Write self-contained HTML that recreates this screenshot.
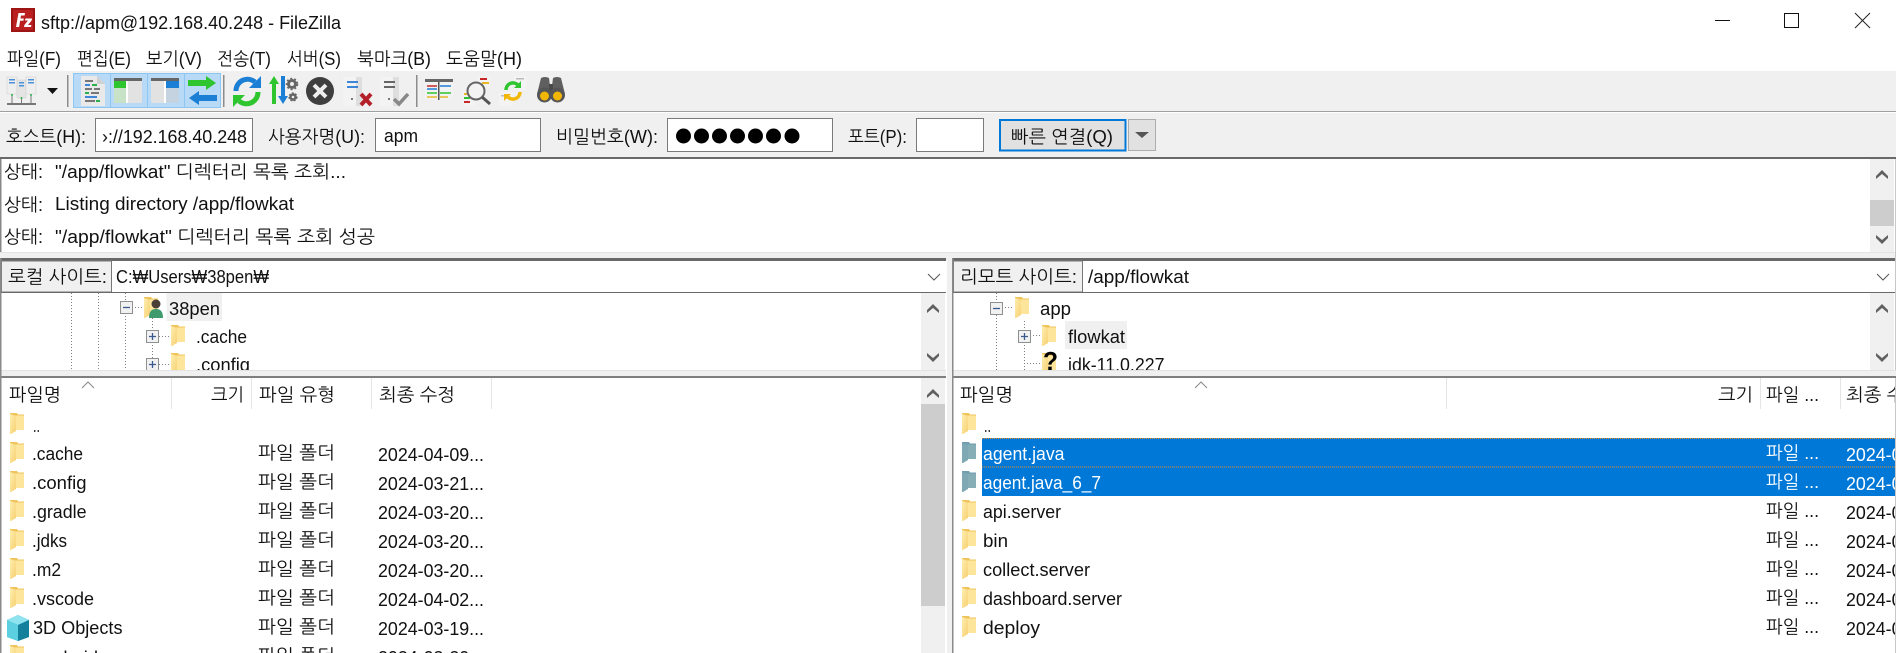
<!DOCTYPE html>
<html lang="ko"><head><meta charset="utf-8"><title>FileZilla</title>
<style>
html,body{margin:0;padding:0;background:#fff;overflow:hidden;width:1896px;height:653px}
svg{display:block}
text{font-family:"Liberation Sans","NanumGothic","Noto Sans CJK KR",sans-serif;font-size:18px;fill:#111}
.w{fill:#fff}
</style></head><body>
<svg xmlns="http://www.w3.org/2000/svg" width="1896" height="653" viewBox="0 0 1896 653">
<defs>
<linearGradient id="fg" x1="0" y1="0" x2="1" y2="1"><stop offset="0" stop-color="#fdeeb0"/><stop offset="1" stop-color="#f8d071"/></linearGradient>
<g id="f"><path d="M0 0H7L8 1.500H14V17H0Z" fill="#f0c45c"/><path d="M5 2.500H14V17H5Z" fill="#fde69c"/><path d="M0 1L6 3V18L1 21H0Z" fill="url(#fg)"/></g>
<g id="fs"><path d="M0 0H7L8 1.500H14V17H0Z" fill="#6f9fb0"/><path d="M5 2.500H14V17H5Z" fill="#86aeb6"/><path d="M0 1L6 3V18L1 21H0Z" fill="#7ea8b4"/></g>
<path id="up" d="M0 6L6 0L12 6L12 9L6 4L0 9Z" fill="#606060"/>
<path id="dn" d="M0 0L6 5L12 0L12 3L6 9L0 3Z" fill="#606060"/>
<g id="plus"><rect x=".5" y=".5" width="12" height="12" fill="#f1f1f1" stroke="#8e8f8f"/><path d="M3 6.5H10M6.5 3V10" stroke="#3b5a90" stroke-width="1.3"/></g>
<g id="minus"><rect x=".5" y=".5" width="12" height="12" fill="#f1f1f1" stroke="#8e8f8f"/><path d="M3 6.5H10" stroke="#3b5a90" stroke-width="1.3"/></g>
</defs>

<!-- base -->
<rect width="1896" height="653" fill="#fff"/>

<!-- title bar -->
<rect x="11" y="8" width="24" height="24" fill="#9d1414"/>
<rect x="13" y="10" width="20" height="20" fill="#bb2020"/>
<path d="M16 27L18.500 13H25L24.600 15.500H21L20.500 18.500H23.800L23.400 20.800H20.100L19.100 27ZM24 27L24.400 25L28 20.500H25L25.400 18.500H32L31.600 20.500L28 25H31.400L31 27Z" fill="#fff"/>
<text x="41" y="29" textLength="300" lengthAdjust="spacingAndGlyphs">sftp://apm@192.168.40.248 - FileZilla</text>
<rect x="1715" y="20" width="15" height="1" fill="#111"/>
<rect x="1784.500" y="13.500" width="14" height="14" fill="none" stroke="#111"/>
<path d="M1855 13L1870 28M1870 13L1855 28" stroke="#222" stroke-width="1"/>

<!-- menu -->
<text x="7" y="65" textLength="54" lengthAdjust="spacingAndGlyphs">파일(F)</text>
<text x="77" y="65" textLength="54" lengthAdjust="spacingAndGlyphs">편집(E)</text>
<text x="146" y="65" textLength="56" lengthAdjust="spacingAndGlyphs">보기(V)</text>
<text x="217" y="65" textLength="54" lengthAdjust="spacingAndGlyphs">전송(T)</text>
<text x="287" y="65" textLength="54" lengthAdjust="spacingAndGlyphs">서버(S)</text>
<text x="357" y="65" textLength="74" lengthAdjust="spacingAndGlyphs">북마크(B)</text>
<text x="446" y="65" textLength="76" lengthAdjust="spacingAndGlyphs">도움말(H)</text>

<!-- toolbar -->
<rect y="71" width="1896" height="40" fill="#f0f0f0"/>
<rect y="111" width="1896" height="1" fill="#a0a0a0"/>
<rect y="112" width="1896" height="1" fill="#fff"/>
<!-- site manager -->
<g>
<rect x="7" y="77" width="10" height="17" fill="#eee" stroke="#ccc" stroke-width=".5"/><rect x="9" y="79" width="6" height="1.500" fill="#4a90d9"/><rect x="9" y="82" width="6" height="1.500" fill="#4a90d9"/>
<rect x="17" y="80" width="9" height="18" fill="#e4e4e4" stroke="#ccc" stroke-width=".5"/><rect x="19" y="82" width="5" height="1.500" fill="#4a90d9"/><rect x="19" y="85" width="5" height="1.500" fill="#4a90d9"/>
<rect x="26" y="77" width="10" height="17" fill="#eee" stroke="#ccc" stroke-width=".5"/><rect x="28" y="79" width="6" height="1.500" fill="#4a90d9"/><rect x="28" y="82" width="6" height="1.500" fill="#4a90d9"/>
<path d="M12 94V103M21.500 98V103M31 94V103" stroke="#777" stroke-width="1"/><rect x="7" y="103" width="29" height="2" fill="#777"/>
<circle cx="12" cy="95" r="1" fill="#2bb24c"/><circle cx="21.500" cy="98" r="1" fill="#2bb24c"/><circle cx="31" cy="95" r="1" fill="#2bb24c"/>
</g>
<path d="M47 88H58L52.500 94Z" fill="#111"/>
<rect x="67" y="75" width="1.500" height="32" fill="#8c8c8c"/>
<rect x="73.500" y="73.500" width="147" height="34" fill="#b8daf6" stroke="#8cc6f3"/>
<path d="M110.500 74V107M147.500 74V107M184.500 74V107" stroke="#8cc6f3"/>
<!-- message log -->
<path d="M81 76H97L105 84V106H81Z" fill="#e9e9e9"/><path d="M97 76L105 84H97Z" fill="#d0d0d0"/>
<g stroke-width="2"><path d="M85 81H93" stroke="#777"/><path d="M85 85H90" stroke="#3f86d8"/><path d="M92 85H97" stroke="#2bb24c"/><path d="M85 89H92" stroke="#777"/><path d="M94 89H100" stroke="#777"/><path d="M85 93H89" stroke="#2bb24c"/><path d="M91 93H99" stroke="#777"/><path d="M85 97H97" stroke="#3f86d8"/><path d="M85 101H95" stroke="#777"/><path d="M96 101H100" stroke="#2bb24c"/></g>
<!-- local tree -->
<rect x="114" y="78" width="28" height="25" rx="1" fill="#e2e2e2"/><rect x="114" y="78" width="28" height="3" fill="#666"/><rect x="114" y="81" width="12" height="7" fill="#2ec52e"/><rect x="114" y="88" width="12" height="15" fill="#c8e2c8"/><rect x="126" y="81" width="2" height="22" fill="#fff"/>
<!-- remote tree -->
<rect x="151" y="78" width="28" height="25" rx="1" fill="#e2e2e2"/><rect x="151" y="78" width="28" height="3" fill="#666"/><rect x="166" y="81" width="13" height="7" fill="#1c7fd6"/><rect x="166" y="88" width="13" height="15" fill="#c5d2df"/><rect x="164" y="81" width="2" height="22" fill="#fff"/>
<!-- queue arrows -->
<path d="M188 80H206V76L216 83L206 90V86H188Z" fill="#2ec52e"/><path d="M217 95H199V91L189 98L199 105V101H217Z" fill="#1c7fd6"/>
<rect x="223" y="75" width="1.500" height="32" fill="#8c8c8c"/>
<!-- refresh -->
<path d="M236 91A11.500 11.500 0 0 1 255 82" fill="none" stroke="#1c7fd6" stroke-width="5"/><path d="M249 88H261V76Z" fill="#1c7fd6"/>
<path d="M258 92A11.500 11.500 0 0 1 239 101" fill="none" stroke="#2ec52e" stroke-width="5"/><path d="M245 95H233V107Z" fill="#2ec52e"/>
<!-- process queue -->
<path d="M274 76L279 84H276V104H272V84H269Z" fill="#2ec52e"/><path d="M281 76H285V96H288L283 104L278 96H281Z" fill="#1c7fd6"/>
<circle cx="292" cy="84" r="3.500" fill="none" stroke="#666" stroke-width="3"/><circle cx="292" cy="84" r="5.500" fill="none" stroke="#666" stroke-width="1.500" stroke-dasharray="2 2"/>
<circle cx="293" cy="97" r="2.500" fill="none" stroke="#666" stroke-width="2.500"/><circle cx="293" cy="97" r="4" fill="none" stroke="#666" stroke-width="1.200" stroke-dasharray="2 1.500"/>
<!-- cancel -->
<circle cx="320" cy="91" r="14" fill="#3f3f3f"/><path d="M314 85L326 97M326 85L314 97" stroke="#eee" stroke-width="4"/>
<!-- disconnect -->
<path d="M343 77H362V106H343Z" fill="#f3f3f3"/><path d="M356 77H362V106H356Z" fill="#dedede"/><rect x="347" y="81" width="11" height="2" fill="#3f86d8"/><rect x="347" y="86" width="11" height="2" fill="#3f86d8"/><circle cx="352" cy="99" r="1" fill="#555"/>
<path d="M361 94L371 105M371 94L361 105" stroke="#b3202a" stroke-width="4"/>
<!-- reconnect -->
<path d="M380 77H399V106H380Z" fill="#f3f3f3"/><path d="M393 77H399V106H393Z" fill="#dedede"/><rect x="384" y="81" width="11" height="2" fill="#666"/><rect x="384" y="86" width="11" height="2" fill="#666"/><circle cx="389" cy="99" r="1" fill="#555"/>
<path d="M394 99L399 104L408 94" fill="none" stroke="#888" stroke-width="3.500"/>
<rect x="416" y="75" width="1.500" height="32" fill="#8c8c8c"/>
<!-- filter -->
<rect x="425" y="79" width="28" height="21" fill="#f2f2f2"/><rect x="425" y="79" width="28" height="3" fill="#666"/><rect x="438" y="82" width="1.500" height="18" fill="#555"/>
<path d="M427 86H437" stroke="#c62828" stroke-width="1.500"/><path d="M427 89H437" stroke="#1c7fd6" stroke-width="1.500"/><path d="M427 93H437" stroke="#2ec52e" stroke-width="1.500"/><path d="M427 97H437" stroke="#e8b82a" stroke-width="1.500"/><path d="M440 86H451" stroke="#1c7fd6" stroke-width="1.500"/><path d="M440 93H451" stroke="#2ec52e" stroke-width="1.500"/><path d="M440 97H448" stroke="#e8b82a" stroke-width="1.500"/>
<!-- search -->
<rect x="478" y="77" width="12" height="12" fill="#f3f3f3"/><rect x="480" y="78" width="7" height="2" fill="#c62828"/><rect x="482" y="82" width="7" height="2" fill="#e8b82a"/>
<rect x="463" y="91" width="12" height="15" fill="#f3f3f3"/><rect x="464" y="93" width="6" height="2" fill="#e8b82a"/><rect x="464" y="97" width="6" height="2" fill="#2ec52e"/><rect x="464" y="101" width="6" height="2" fill="#c62828"/>
<circle cx="476" cy="91" r="8.500" fill="#f4f4f4" fill-opacity=".8" stroke="#666" stroke-width="2"/><path d="M482 97L490 104" stroke="#555" stroke-width="3"/>
<!-- sync -->
<rect x="514" y="76" width="13" height="14" fill="#f3f3f3"/><rect x="516" y="78" width="8" height="1.500" fill="#bbb"/><rect x="499" y="92" width="14" height="14" fill="#f3f3f3"/><rect x="501" y="95" width="8" height="1.500" fill="#bbb"/>
<path d="M506 90A7 7 0 0 1 518 85" fill="none" stroke="#2ec52e" stroke-width="3.500"/><path d="M514 88H521V81Z" fill="#2ec52e"/><path d="M520 92A7 7 0 0 1 508 97" fill="none" stroke="#f2b705" stroke-width="3.500"/><path d="M511 94H504V101Z" fill="#f2b705"/>
<!-- binoculars -->
<path d="M541 78Q545 76 549 78L550 86H552L553 78Q557 76 561 78L565 94H537Z" fill="#5f5f5f"/><rect x="549" y="84" width="4" height="8" fill="#4a4a4a"/><circle cx="544.500" cy="95" r="7.500" fill="#555"/><circle cx="557.500" cy="95" r="7.500" fill="#555"/><circle cx="544.500" cy="96" r="4.500" fill="#f2b705"/><circle cx="557.500" cy="96" r="4.500" fill="#f2b705"/>

<!-- quickconnect -->
<rect y="113" width="1896" height="44" fill="#f0f0f0"/>
<rect y="157" width="1896" height="2" fill="#696969"/>
<text x="6" y="143" textLength="80" lengthAdjust="spacingAndGlyphs">호스트(H):</text>
<rect x="95.500" y="118.500" width="157" height="33" fill="#fff" stroke="#7a7a7a"/>
<text x="102" y="143" textLength="145" lengthAdjust="spacingAndGlyphs">›://192.168.40.248</text>
<text x="268" y="143" textLength="97" lengthAdjust="spacingAndGlyphs">사용자명(U):</text>
<rect x="375.500" y="118.500" width="165" height="33" fill="#fff" stroke="#7a7a7a"/>
<text x="384" y="142" textLength="34" lengthAdjust="spacingAndGlyphs">apm</text>
<text x="556" y="143" textLength="102" lengthAdjust="spacingAndGlyphs">비밀번호(W):</text>
<rect x="667.500" y="118.500" width="165" height="33" fill="#fff" stroke="#7a7a7a"/>
<g fill="#000"><circle cx="683.500" cy="136" r="7.500"/><circle cx="701.500" cy="136" r="7.500"/><circle cx="719.500" cy="136" r="7.500"/><circle cx="737.500" cy="136" r="7.500"/><circle cx="755.500" cy="136" r="7.500"/><circle cx="773.500" cy="136" r="7.500"/><circle cx="792" cy="136" r="7.500"/></g>
<text x="848" y="143" textLength="59" lengthAdjust="spacingAndGlyphs">포트(P):</text>
<rect x="916.500" y="118.500" width="67" height="33" fill="#fff" stroke="#7a7a7a"/>
<rect x="1000" y="120" width="125.500" height="30.500" fill="#e1e1e1" stroke="#0078d7" stroke-width="2"/>
<text x="1011" y="143" textLength="102" lengthAdjust="spacingAndGlyphs">빠른 연결(Q)</text>
<rect x="1128.500" y="119.500" width="27" height="31" fill="#e1e1e1" stroke="#adadad"/>
<path d="M1135 132H1149L1142 138Z" fill="#555"/>

<!-- log -->
<rect y="159" width="1896" height="93" fill="#fff"/>
<rect x="0" y="159" width="1.500" height="93" fill="#888"/>
<text x="4" y="178" textLength="39" lengthAdjust="spacingAndGlyphs">상태:</text>
<text x="55" y="178" textLength="291" lengthAdjust="spacingAndGlyphs">"/app/flowkat" 디렉터리 목록 조회...</text>
<text x="4" y="211" textLength="39" lengthAdjust="spacingAndGlyphs">상태:</text>
<text x="55" y="210" textLength="239" lengthAdjust="spacingAndGlyphs">Listing directory /app/flowkat</text>
<text x="4" y="243" textLength="39" lengthAdjust="spacingAndGlyphs">상태:</text>
<text x="55" y="243" textLength="320" lengthAdjust="spacingAndGlyphs">"/app/flowkat" 디렉터리 목록 조회 성공</text>
<rect x="1870" y="159" width="24" height="93" fill="#f0f0f0"/>
<rect x="1870" y="200" width="24" height="26" fill="#cdcdcd"/>
<use href="#up" x="1876" y="170"/><use href="#dn" x="1876" y="235"/>
<rect y="252" width="1896" height="9" fill="#f0f0f0"/>
<rect y="252" width="1896" height="1" fill="#e3e3e3"/>
<rect x="0" y="258" width="946" height="3" fill="#696969"/>
<rect x="952" y="258" width="944" height="3" fill="#696969"/>

<!-- panels white -->
<rect x="1" y="261" width="945" height="109" fill="#fff"/>
<rect x="953" y="261" width="942" height="109" fill="#fff"/>

<!-- local path -->
<rect x="1.500" y="261" width="110" height="31" fill="#f0f0f0" stroke="#777"/>
<text x="8" y="283" textLength="99" lengthAdjust="spacingAndGlyphs">로컬 사이트:</text>
<text x="116" y="283" textLength="153" lengthAdjust="spacingAndGlyphs">C:₩Users₩38pen₩</text>
<path d="M928 274L934 280L940 274" fill="none" stroke="#555"/>
<rect x="0" y="292" width="946" height="1" fill="#696969"/>

<!-- remote path -->
<rect x="953.500" y="261" width="129" height="31" fill="#f0f0f0" stroke="#777"/>
<text x="960" y="283" textLength="117" lengthAdjust="spacingAndGlyphs">리모트 사이트:</text>
<text x="1088" y="283" textLength="101" lengthAdjust="spacingAndGlyphs">/app/flowkat</text>
<path d="M1877 274L1883 280L1889 274" fill="none" stroke="#555"/>
<rect x="952" y="292" width="944" height="1" fill="#696969"/>

<!-- right edge -->
<rect x="1895" y="159" width="1" height="494" fill="#c8c8c8"/>

<!-- local tree -->
<g stroke="#808080" stroke-dasharray="1 2" fill="none">
<path d="M71.500 293V370M98.500 293V370M125.500 293V302M152.500 318V370M132 307.500H143M159 336.500H169M159 364.500H169"/>
<path d="M125.500 313V370"/>
</g>
<use href="#minus" x="120" y="301"/>
<use href="#f" x="144" y="297"/>
<circle cx="156" cy="304" r="4.500" fill="#4a4038"/>
<path d="M149 318C149 311 152 309 156 309C160 309 163 311 163 318Z" fill="#3f9a6e"/>
<rect x="166.500" y="293" width="55.500" height="28" fill="#f0f0f0"/>
<text x="169" y="315" textLength="51" lengthAdjust="spacingAndGlyphs">38pen</text>
<use href="#plus" x="146" y="330"/>
<use href="#f" x="171" y="325"/>
<text x="196" y="343" textLength="51" lengthAdjust="spacingAndGlyphs">.cache</text>
<use href="#plus" x="146" y="358"/>
<use href="#f" x="171" y="353"/>
<text x="196" y="371" textLength="54" lengthAdjust="spacingAndGlyphs">.config</text>
<rect x="921" y="293" width="24" height="77" fill="#f0f0f0"/>
<use href="#up" x="927" y="304"/><use href="#dn" x="927" y="353"/>

<!-- right tree -->
<g stroke="#808080" stroke-dasharray="1 2" fill="none">
<path d="M996.500 293V303M996.500 315V370M1024.500 321V370M1002 307.500H1013M1030 335.500H1040M1024 363.500H1041"/>
</g>
<use href="#minus" x="990" y="302"/>
<use href="#f" x="1015" y="297"/>
<text x="1040" y="315" textLength="31" lengthAdjust="spacingAndGlyphs">app</text>
<use href="#plus" x="1018" y="330"/>
<use href="#f" x="1042" y="325"/>
<rect x="1065" y="321" width="62" height="28" fill="#f0f0f0"/>
<text x="1068" y="343" textLength="57" lengthAdjust="spacingAndGlyphs">flowkat</text>
<use href="#f" x="1042" y="353"/>
<text x="1043" y="370" style="font-size:26px;font-weight:bold;fill:#000" textLength="15" lengthAdjust="spacingAndGlyphs">?</text>
<text x="1068" y="371" textLength="96.500" lengthAdjust="spacingAndGlyphs">jdk-11.0.227</text>
<rect x="1870" y="293" width="24" height="77" fill="#f0f0f0"/>
<use href="#up" x="1876" y="304"/><use href="#dn" x="1876" y="353"/>

<!-- separator between tree and list -->
<rect x="0" y="370" width="946" height="8" fill="#f0f0f0"/>
<rect x="0" y="370" width="946" height="1" fill="#e3e3e3"/>
<rect x="0" y="376" width="946" height="2" fill="#7f7f7f"/>
<rect x="952" y="370" width="944" height="8" fill="#f0f0f0"/>
<rect x="952" y="370" width="944" height="1" fill="#e3e3e3"/>
<rect x="952" y="376" width="944" height="2" fill="#7f7f7f"/>
<rect x="947" y="258" width="5" height="395" fill="#f0f0f0"/>
<rect x="0" y="258" width="1.500" height="395" fill="#8a8a8a"/>
<rect x="952" y="258" width="1.500" height="395" fill="#8a8a8a"/>

<!-- left list -->
<g stroke="#e5e5e5"><path d="M171.500 378V409M251.500 378V409M371.500 378V409M491.500 378V409"/></g>
<path d="M82 388L88 382L94 388" fill="none" stroke="#888"/>
<text x="9" y="401" textLength="52" lengthAdjust="spacingAndGlyphs">파일명</text>
<text x="211" y="401" textLength="33" lengthAdjust="spacingAndGlyphs">크기</text>
<text x="259" y="401" textLength="76" lengthAdjust="spacingAndGlyphs">파일 유형</text>
<text x="379" y="401" textLength="76" lengthAdjust="spacingAndGlyphs">최종 수정</text>
<use href="#f" x="10" y="413"/><text x="33" y="432" textLength="7" lengthAdjust="spacingAndGlyphs">..</text>

<use href="#f" x="10" y="442"/><text x="32" y="460" textLength="51" lengthAdjust="spacingAndGlyphs">.cache</text><text x="258" y="459" textLength="77" lengthAdjust="spacingAndGlyphs">파일 폴더</text><text x="378" y="461" textLength="106" lengthAdjust="spacingAndGlyphs">2024-04-09...</text>
<use href="#f" x="10" y="471"/><text x="32" y="489" textLength="54.500" lengthAdjust="spacingAndGlyphs">.config</text><text x="258" y="488" textLength="77" lengthAdjust="spacingAndGlyphs">파일 폴더</text><text x="378" y="490" textLength="106" lengthAdjust="spacingAndGlyphs">2024-03-21...</text>
<use href="#f" x="10" y="500"/><text x="32" y="518" textLength="54.500" lengthAdjust="spacingAndGlyphs">.gradle</text><text x="258" y="517" textLength="77" lengthAdjust="spacingAndGlyphs">파일 폴더</text><text x="378" y="519" textLength="106" lengthAdjust="spacingAndGlyphs">2024-03-20...</text>
<use href="#f" x="10" y="529"/><text x="32" y="547" textLength="35" lengthAdjust="spacingAndGlyphs">.jdks</text><text x="258" y="546" textLength="77" lengthAdjust="spacingAndGlyphs">파일 폴더</text><text x="378" y="548" textLength="106" lengthAdjust="spacingAndGlyphs">2024-03-20...</text>
<use href="#f" x="10" y="558"/><text x="32" y="576" textLength="29" lengthAdjust="spacingAndGlyphs">.m2</text><text x="258" y="575" textLength="77" lengthAdjust="spacingAndGlyphs">파일 폴더</text><text x="378" y="577" textLength="106" lengthAdjust="spacingAndGlyphs">2024-03-20...</text>
<use href="#f" x="10" y="587"/><text x="32" y="605" textLength="62" lengthAdjust="spacingAndGlyphs">.vscode</text><text x="258" y="604" textLength="77" lengthAdjust="spacingAndGlyphs">파일 폴더</text><text x="378" y="606" textLength="106" lengthAdjust="spacingAndGlyphs">2024-04-02...</text>
<path d="M18 615L29 620V637L18 641L7 637V620Z" fill="#2aa7c9"/><path d="M7 620L18 615L29 620L18 625Z" fill="#8fe3ee"/><path d="M7 620L18 625V641L7 637Z" fill="#5ccfe0"/><path d="M18 625L29 620V637L18 641Z" fill="#14809c"/>
<text x="33" y="634" textLength="89.500" lengthAdjust="spacingAndGlyphs">3D Objects</text><text x="258" y="633" textLength="77" lengthAdjust="spacingAndGlyphs">파일 폴더</text><text x="378" y="635" textLength="106" lengthAdjust="spacingAndGlyphs">2024-03-19...</text>
<use href="#f" x="10" y="645"/><text x="32" y="664" textLength="66" lengthAdjust="spacingAndGlyphs">.android</text><text x="258" y="662" textLength="77" lengthAdjust="spacingAndGlyphs">파일 폴더</text><text x="378" y="664" textLength="106" lengthAdjust="spacingAndGlyphs">2024-03-20...</text>
<rect x="921" y="378" width="24" height="275" fill="#f0f0f0"/>
<rect x="921" y="404" width="24" height="202" fill="#cdcdcd"/>
<use href="#up" x="927" y="389"/>

<!-- right list -->
<g stroke="#e5e5e5"><path d="M1446.500 378V409M1760.500 378V409M1840.500 378V409"/></g>
<path d="M1195 388L1201 382L1207 388" fill="none" stroke="#888"/>
<text x="960" y="401" textLength="53" lengthAdjust="spacingAndGlyphs">파일명</text>
<text x="1718" y="401" textLength="35" lengthAdjust="spacingAndGlyphs">크기</text>
<text x="1766" y="401" textLength="53" lengthAdjust="spacingAndGlyphs">파일 ...</text>
<svg x="1840" y="378" width="55" height="275"><text x="6" y="23" textLength="76" lengthAdjust="spacingAndGlyphs">최종 수정</text>
<rect x="0" y="60" width="55" height="58" fill="#0078d7"/>
<g stroke="#f08a24" stroke-dasharray="1 1"><path d="M0 60.500H55M0 89H55"/></g>
<text class="w" x="6" y="83" textLength="106" lengthAdjust="spacingAndGlyphs">2024-04-09...</text>
<text class="w" x="6" y="112" textLength="106" lengthAdjust="spacingAndGlyphs">2024-04-09...</text>
<text x="6" y="141" textLength="106" lengthAdjust="spacingAndGlyphs">2024-04-09...</text>
<text x="6" y="170" textLength="106" lengthAdjust="spacingAndGlyphs">2024-04-09...</text>
<text x="6" y="199" textLength="106" lengthAdjust="spacingAndGlyphs">2024-04-09...</text>
<text x="6" y="228" textLength="106" lengthAdjust="spacingAndGlyphs">2024-04-09...</text>
<text x="6" y="257" textLength="106" lengthAdjust="spacingAndGlyphs">2024-04-09...</text>
</svg>
<rect x="982" y="438" width="858" height="58" fill="#0078d7"/>
<g stroke="#f08a24" stroke-dasharray="1 1"><path d="M982 438.500H1840M982 467H1840"/></g>
<use href="#f" x="962" y="413"/><text x="984" y="432" textLength="7" lengthAdjust="spacingAndGlyphs">..</text>
<use href="#fs" x="962" y="442"/><text class="w" x="983" y="460" textLength="81.500" lengthAdjust="spacingAndGlyphs">agent.java</text><text class="w" x="1766" y="459" textLength="53" lengthAdjust="spacingAndGlyphs">파일 ...</text>
<use href="#fs" x="962" y="471"/><text class="w" x="983" y="489" textLength="118" lengthAdjust="spacingAndGlyphs">agent.java_6_7</text><text class="w" x="1766" y="488" textLength="53" lengthAdjust="spacingAndGlyphs">파일 ...</text>
<use href="#f" x="962" y="500"/><text x="983" y="518" textLength="78" lengthAdjust="spacingAndGlyphs">api.server</text><text x="1766" y="517" textLength="53" lengthAdjust="spacingAndGlyphs">파일 ...</text>
<use href="#f" x="962" y="529"/><text x="983" y="547" textLength="25" lengthAdjust="spacingAndGlyphs">bin</text><text x="1766" y="546" textLength="53" lengthAdjust="spacingAndGlyphs">파일 ...</text>
<use href="#f" x="962" y="558"/><text x="983" y="576" textLength="107" lengthAdjust="spacingAndGlyphs">collect.server</text><text x="1766" y="575" textLength="53" lengthAdjust="spacingAndGlyphs">파일 ...</text>
<use href="#f" x="962" y="587"/><text x="983" y="605" textLength="139" lengthAdjust="spacingAndGlyphs">dashboard.server</text><text x="1766" y="604" textLength="53" lengthAdjust="spacingAndGlyphs">파일 ...</text>
<use href="#f" x="962" y="616"/><text x="983" y="634" textLength="57" lengthAdjust="spacingAndGlyphs">deploy</text><text x="1766" y="633" textLength="53" lengthAdjust="spacingAndGlyphs">파일 ...</text>
</svg>
</body></html>
